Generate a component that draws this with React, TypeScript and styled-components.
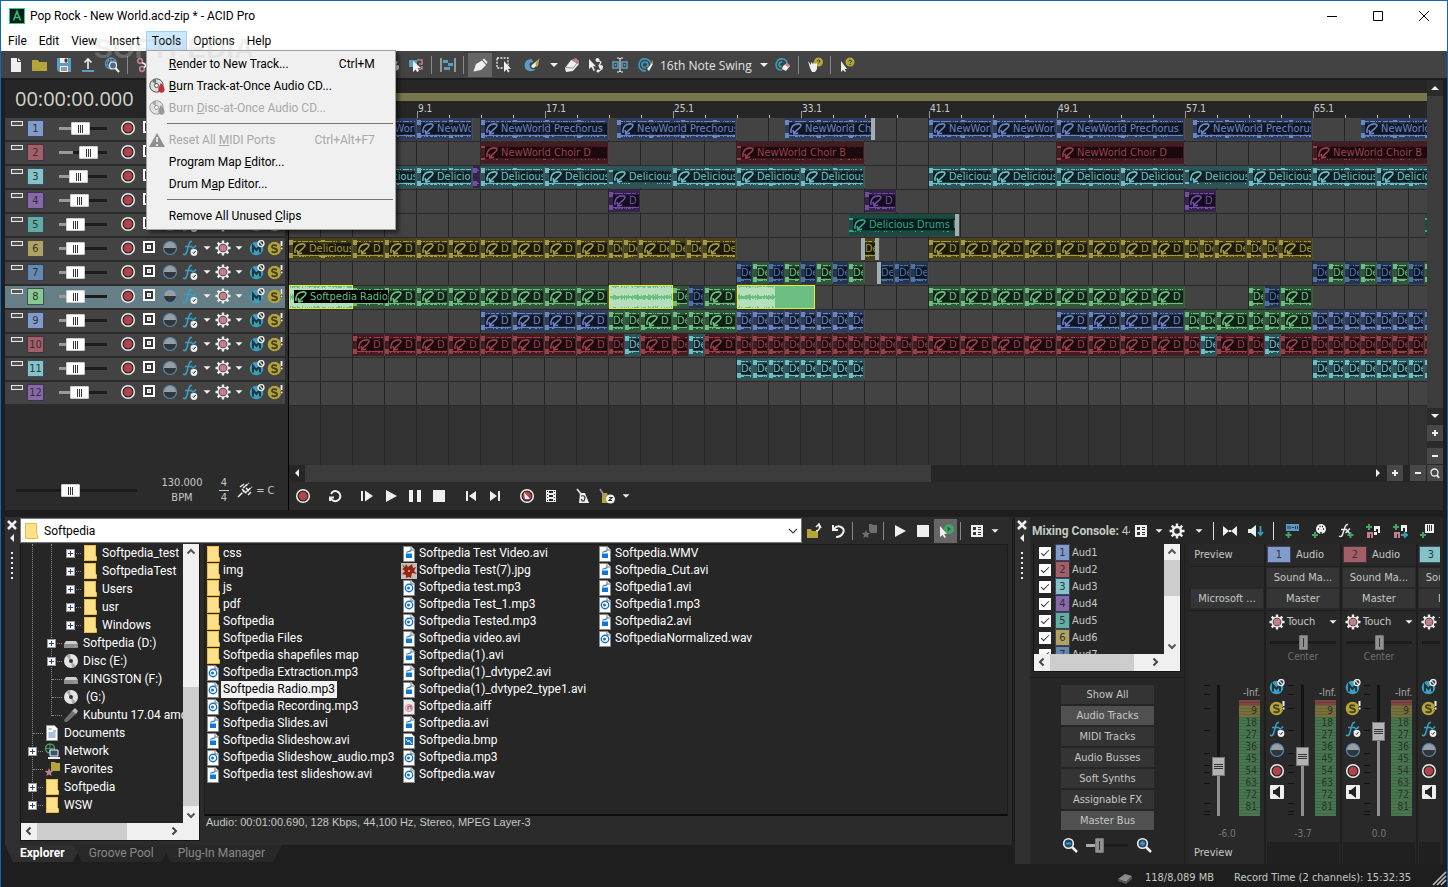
import React, { useState } from 'react';
import styled, { createGlobalStyle, css } from 'styled-components';

const font = {
  ui: 'Roboto, "Open Sans", sans-serif',
  clock: '"Open Sans", "Noto Sans", sans-serif',
  small: '"DejaVu Sans Condensed", "DejaVu Sans", sans-serif',
  plain: '"Liberation Sans", Arial, sans-serif',
};

const color = {
  frame: '#1068b8',
  base: '#1e1e1e',
  panel: '#2b2b2b',
  well: '#262626',
  raised: '#434343',
  text: '#c3c9c3',
  light: '#efefef',
};

const palette = {
  blue: { bg: '#2f3b5b', wave: '#6886c6', },
  red: { bg: '#451c23', wave: '#9b3f4b', },
  cyan: { bg: '#2d5459', wave: '#6dbfc6', },
  purple: { bg: '#34234b', wave: '#734da3', },
  teal: { bg: '#1a4a42', wave: '#2fa88c', },
  yellow: { bg: '#48421a', wave: '#a39a42', },
  navy: { bg: '#23354f', wave: '#4c72a8', },
  green: { bg: '#31573b', wave: '#6abf80', },
};

type Tone = keyof typeof palette;

const trackColors = [
  '#819bcb', '#a35e68', '#82c4c9', '#8768a8', '#5fada3', '#b0a264',
  '#6488af', '#86c991', '#819bcb', '#a35e68', '#82c4c9', '#8768a8',
];

const trackVolumes = [ 40, 70, 33, 37, 23, 23, 23, 23, 23, 23, 23, 37, ];

interface ClipData {
  x: number;
  w: number;
  tone: Tone;
  label: string;
  kind?: 'selected' | 'solid' | 'quiet';
  fade?: 'left' | 'right' | 'both';
  wide?: boolean;
}

const clip = (x: number, w: number, tone: Tone, label: string, extra: Partial<ClipData> = {}): ClipData => ({
  x, w, tone, label, ...extra,
});

const run = (x: number, count: number, w: number, tone: Tone, label: string): ClipData[] => (
  Array.from({ length: count, }, (_, i) => clip(x + i * w, w, tone, label))
);

const alternate = (x: number, count: number): ClipData[] => (
  Array.from({ length: count, }, (_, i) => clip(x + i * 16, 16, i % 2 ? 'green' : 'navy', 'De'))
);

const fill = (x: number, tone: Tone, accent: Tone): ClipData[] => [
  clip(x, 16, tone, 'De'), clip(x + 16, 16, accent, 'De'), clip(x + 32, 32, tone, 'D'),
  clip(x + 64, 16, tone, 'De'), clip(x + 80, 16, accent, 'De'), clip(x + 96, 32, tone, 'D'),
];

const yellowFill = (x: number): ClipData[] => [
  clip(x, 15, 'yellow', 'De'), clip(x + 15, 15, 'yellow', 'De'), clip(x + 30, 32, 'yellow', 'De'),
  clip(x + 62, 16, 'yellow', 'De'), clip(x + 78, 16, 'yellow', 'De'), clip(x + 94, 34, 'yellow', 'De'),
];

const lanes: ClipData[][] = [
  [
    clip(64, 64, 'blue', 'NewWorld'), clip(128, 56, 'blue', 'NewWorld'),
    clip(192, 128, 'blue', 'NewWorld Prechorus'), clip(328, 120, 'blue', 'NewWorld Prechorus'),
    clip(496, 91, 'blue', 'NewWorld Chorus', { fade: 'right', }),
    clip(640, 64, 'blue', 'NewWorld'), clip(704, 64, 'blue', 'NewWorld'),
    clip(768, 128, 'blue', 'NewWorld Prechorus'), clip(904, 120, 'blue', 'NewWorld Prechorus'),
    clip(1072, 91, 'blue', 'NewWorld Chorus'),
  ],
  [
    clip(192, 128, 'red', 'NewWorld Choir D', { kind: 'quiet', }),
    clip(448, 128, 'red', 'NewWorld Choir B', { kind: 'quiet', }),
    clip(768, 128, 'red', 'NewWorld Choir D', { kind: 'quiet', }),
    clip(1024, 128, 'red', 'NewWorld Choir B', { kind: 'quiet', }),
  ],
  [
    clip(64, 64, 'cyan', 'Delicious'), clip(128, 56, 'cyan', 'Delicious'), clip(184, 8, 'purple', ''),
    ...run(192, 2, 64, 'cyan', 'Delicious'), clip(320, 64, 'cyan', 'Delicious', { kind: 'quiet', }),
    ...run(384, 3, 64, 'cyan', 'Delicious'), ...run(640, 4, 64, 'cyan', 'Delicious'),
    clip(896, 64, 'cyan', 'Delicious', { kind: 'quiet', }), ...run(960, 3, 64, 'cyan', 'Delicious'),
  ],
  [ clip(320, 32, 'purple', 'D'), clip(576, 32, 'purple', 'D'), clip(896, 32, 'purple', 'D'), ],
  [
    clip(560, 111, 'teal', 'Delicious Drums I', { kind: 'quiet', fade: 'right', }),
    clip(1136, 64, 'teal', '', { kind: 'quiet', }),
  ],
  [
    clip(0, 64, 'yellow', 'Delicious'), ...run(64, 8, 32, 'yellow', 'D'), ...yellowFill(320),
    clip(572, 19, 'yellow', 'De', { fade: 'both', }),
    ...run(640, 8, 32, 'yellow', 'D'), ...yellowFill(896),
  ],
  [
    ...alternate(448, 8), clip(588, 18, 'navy', 'De', { fade: 'left', }), clip(606, 16, 'navy', 'De'),
    clip(622, 18, 'navy', 'De'), ...alternate(1024, 8),
  ],
  [
    ...run(64, 8, 32, 'green', 'D'),
    clip(0, 64, 'green', 'Softpedia Radio', { kind: 'selected', wide: true, }),
    clip(320, 64, 'green', '', { kind: 'selected', }),
    clip(384, 16, 'green', 'De'), clip(400, 16, 'navy', 'De'), clip(416, 32, 'green', 'D'),
    clip(448, 78, 'green', '', { kind: 'solid', }), ...run(640, 8, 32, 'green', 'D'),
    clip(960, 16, 'green', 'De'), clip(976, 16, 'navy', 'De'), clip(992, 32, 'green', 'D'),
  ],
  [
    ...run(192, 4, 32, 'blue', 'D'), ...fill(320, 'green', 'green'), ...run(448, 8, 16, 'blue', 'De'),
    ...run(768, 4, 32, 'blue', 'D'), ...fill(896, 'green', 'green'), ...run(1024, 8, 16, 'blue', 'De'),
  ],
  [
    ...run(64, 8, 32, 'red', 'D'), ...fill(320, 'red', 'cyan'), ...run(448, 12, 16, 'red', 'De'),
    ...run(640, 8, 32, 'red', 'D'), ...fill(896, 'red', 'cyan'), ...run(1024, 8, 16, 'red', 'De'),
  ],
  [ ...run(448, 8, 16, 'cyan', 'De'), ...run(1024, 8, 16, 'cyan', 'De'), ],
  [],
];

const noise = (n: number) => {
  const v = Math.sin(n * 12.9898) * 43758.5453;

  return v - Math.floor(v);
};

function wavePath(seed: number, width: number, kind?: ClipData['kind']) {
  let d = '';
  const full = kind === 'selected' || kind === 'solid';
  const end = kind === 'solid' ? 37 : width;

  for (let x = 0; x < end; x += 1) {
    const n = noise(seed + x);

    if (full) {
      const h = 6 + Math.floor(n * 5);
      d += `M${x} ${5 - Math.floor(h / 2)}h1v${h}h-1zM${x} ${17 - Math.floor(h / 2)}h1v${h}h-1z`;
    } else if (kind === 'quiet') {
      const h = x < 4 || n > 0.85 ? 2 : 1;
      d += `M${x} 4h1v${h}h-1zM${x} 16h1v${h}h-1z`;
    } else {
      const h = x % 32 < 4 ? 5 : 1 + Math.floor(n * 3);
      d += `M${x} ${4 - Math.floor(h / 2)}h1v${h}h-1zM${x} ${17 - Math.floor(h / 2)}h1v${h}h-1z`;
    }
  }

  return d;
}

// ---------------------------------------------------------------- icons

const W = '#efefef';
const B = '#5b9dc0';
const T = '#3a9fbf';
const Y = '#b3a537';
const R = '#b5424a';
const P = '#c07f8a';
const G = '#45a36a';

const gearTeeth = (
  <g stroke={W} strokeWidth='2.4'>
    <path d='M8 .5v15M.5 8h15M2.700 2.700l10.600 10.600M13.300 2.700L2.700 13.300' />
  </g>
);

const icons: Record<string, React.ReactNode> = {
  app: (
    <>
      <rect width='16' height='16' fill='#35c98a' />
      <rect x='1' y='1' width='14' height='14' fill='#0d1c1a' />
      <path d='M4.500 12.500L8 3.500l3.500 9M6 9.500h4' stroke='#2fbf7c' strokeWidth='1.600' fill='none' />
    </>
  ),
  newFile: <path d='M3 1h6v4h4v10H3zM10 1l3 3h-3z' fill={W} />,
  open: <path d='M0 3h6l1 2h8v9H0z' fill={Y} />,
  save: (
    <>
      <path d='M1 1h14v14H3l-2-2z' fill={B} />
      <path d='M4 1h8v5H4zM4 9h8v6H4z' fill={W} />
      <path d='M9 2h2v3H9zM5 11h6M5 13h6' stroke='#444' fill='#444' />
    </>
  ),
  upload: <><path d='M8 12V3M4.500 5.500L8 2l3.500 3.500' stroke={W} strokeWidth='1.600' fill='none' /><path d='M2 14h12' stroke={B} strokeWidth='2' /></>,
  globe: (
    <>
      <circle cx='7' cy='6.500' r='5.500' fill='none' stroke={B} strokeWidth='1.300' />
      <path d='M2 4h10M1 8h11M7 1v11M4.500 2q-2 4 0 9' stroke={B} fill='none' />
      <circle cx='9' cy='8.500' r='3.500' fill='#568' stroke={W} strokeWidth='1.200' />
      <path d='M11.500 11l3.500 4' stroke={W} strokeWidth='2' />
    </>
  ),
  cut: <g fill='none' stroke={P} strokeWidth='1.800'><circle cx='4' cy='4' r='2.300' /><circle cx='6' cy='12' r='2.300' /><path d='M6 5.500l9 5M8 10.500L15 4' stroke={W} /></g>,
  copy: <path d='M2 2h8v3h4v9H6v-3H2z' fill={B} />,
  automation: (
    <>
      <path d='M1 3h8v7H1z' fill={B} />
      <path d='M9 3h5v4h-3M9 12h5V9' stroke={P} strokeWidth='1.500' fill='none' />
      <path d='M5 4v11l2.500-2.500L9 15l2-1-1.500-3H13z' fill={W} />
    </>
  ),
  snap: <><path d='M1 1v14M15 1v14' stroke='#b4bcbc' strokeWidth='1.400' /><path d='M3 3h5v3H3zM8 6h5v3H8zM4 10h6v3H4z' fill={B} /></>,
  pencil: <path d='M1.500 14.500L4 7l6-3.500L14 8l-5 5zM10.500 2.500l1.500-1L15.500 5l-1 2z' fill={W} />,
  select: <><path d='M1 1h11v10H1z' fill='none' stroke={W} strokeWidth='1.300' strokeDasharray='2 1.300' /><path d='M8 4v11l2.500-2.500 1.500 3 1.500-.7-1.500-3H15z' fill={W} /></>,
  paint: <><path d='M8 2Q.5 2 .5 9q1 6 8 5 2 0 3-2-6 1-6-4 0-3 4-3-1 0-1.500-3z' fill={B} /><path d='M7 9q2 4 5 0l2-6-5 4z' fill={W} /><path d='M11.500 6l4-5-1.500 8-2 1z' fill={Y} /></>,
  erase: <><path d='M7 3l7 1 1 3-6 7-7 1-1-4z' fill={W} /><path d='M7 3l5-2 3 3v3l-3-1z' fill={P} /><path d='M2 10.500l7 .5 5-6' stroke='#777' fill='none' strokeWidth='.8' /></>,
  nodes: <><path d='M1 2v10l2.500-2 2 4 1.500-.7-2-4H8z' fill={W} /><path d='M9 3l4 2-2 4 3 3-3 2' stroke={W} fill='none' strokeWidth='1.200' /><circle cx='9.500' cy='3' r='2' fill={W} /><circle cx='13' cy='10' r='2' fill={W} /><circle cx='10' cy='14' r='1.500' fill={W} /></>,
  range: <><path d='M1 5h5v6H1zM10 5h5v6h-5z' fill='none' stroke={B} strokeWidth='1.500' /><path d='M3.500 7v2M12.500 7v2' stroke={B} strokeWidth='1.500' /><path d='M5 1h2l1 1 1-1h2M8 2v12M5 15h2l1-1 1 1h2' stroke={W} fill='none' /></>,
  groove: <><path d='M8 14Q1 14 1 7.500 2 1 8 2q5 1 5 6M8 11q-4 0-4-3.500Q4 5 7 5q3 0 3 3 0 2-2 1' stroke={T} fill='none' strokeWidth='1.600' /><path d='M9 12l5-6 1 1-4 7z' fill={W} /><path d='M13 6l2-3v5z' fill={Y} /></>,
  grooveErase: <><path d='M7 13Q1 13 1 7.500 2 1 8 2q4 1 4 4M7 10q-3 0-3-2.500Q4 5 7 5' stroke={T} fill='none' strokeWidth='1.600' /><path d='M8 9l4-3 3 3-4 5-4-2z' fill={W} /><path d='M12 6l3 2-2 2-3-2z' fill={P} /></>,
  hand: <><circle cx='11.500' cy='5' r='4.500' fill={Y} /><path d='M10 4q2-2 3 0 0 1-1.500 2' stroke='#333' fill='none' /><path d='M1 4l3 4V5l2 2 1-2 1 2 2-1v6l-2 3H5l-2-4z' fill={W} /></>,
  whatsThis: <><circle cx='11' cy='5' r='4.500' fill={Y} /><path d='M9.500 4q1.500-2 3 0 0 1-1.500 2M11 7v1' stroke='#333' fill='none' /><path d='M2 4v11l2-2 2 2 1-.7-1.500-2.300H8z' fill={W} /></>,
  record: <><circle cx='8' cy='8' r='6.300' fill='#2a2a2a' stroke={W} strokeWidth='1.500' /><circle cx='8' cy='8' r='4.300' fill={R} /></>,
  target: <><rect x='3' y='2' width='10' height='10' fill='#333' stroke='#fff' strokeWidth='2' /><rect x='6.500' y='5.500' width='3' height='3' fill='#bbb' stroke='#fff' /></>,
  phase: <><circle cx='8' cy='8' r='6.500' fill='#32363a' /><path d='M1.500 8a6.500 6.500 0 0 1 13 0z' fill='#999ea2' /><circle cx='8' cy='8' r='6.500' fill='none' stroke='#5488b4' strokeWidth='1.200' /></>,
  fx: <><path d='M1 14q3 2 4-3L7 4q1-3 3-2.500M3 6.500h6M9 6l5 5M14 5.500L8.500 11' stroke={T} strokeWidth='1.600' fill='none' /><circle cx='12' cy='12.500' r='3.400' fill={W} /><path d='M10.700 12.500l1 1 1.800-2.500' stroke='#333' fill='none' /></>,
  fxAdd: <><path d='M1 13q3 2 4-3l2-6q1-3 3-2.500M3 6.500h6M8 6l4 5M12 5.500L7.500 10' stroke={W} strokeWidth='1.400' fill='none' /><path d='M12.500 9v6M9.500 12h6' stroke={G} strokeWidth='2' /></>,
  gear: <>{gearTeeth}<circle cx='8' cy='8' r='5.600' fill={W} /><circle cx='8' cy='8' r='4.300' fill='#333' /><circle cx='8' cy='8' r='3.600' fill={P} /></>,
  gearPlain: <>{gearTeeth}<circle cx='8' cy='8' r='4' fill='#2b2b2b' stroke={W} strokeWidth='2.400' /></>,
  mute: <><circle cx='7.500' cy='8.500' r='6.800' fill={T} /><path d='M4 12.500V6l3.500 4L11 6v6.500' stroke='#23343c' strokeWidth='2' fill='none' /><circle cx='12' cy='3.600' r='3' fill='#333' stroke={W} strokeWidth='1.300' /><path d='M10 1.600l4 4' stroke={W} strokeWidth='1.200' /></>,
  solo: <><circle cx='7.500' cy='8.500' r='6.800' fill={Y} /><path d='M10 5.800Q5 4 5 6.800q0 1.500 2.500 1.700Q10 9 10 10.500q0 2.700-5.500 1.200' stroke='#44401c' strokeWidth='1.800' fill='none' /><path d='M13 1h3v5h-3zM13 7h3v3h-3z' fill='#333' /><path d='M14.500 1v5M14.500 7.500v2' stroke={W} strokeWidth='2' /></>,
  output: <><rect x='1' y='1' width='14' height='14' rx='1' fill={W} /><path d='M4 6h2l5-4v12l-5-4H4z' fill='#222' /></>,
  loop: <path d='M3 13V9.500H7M3.500 9.500a5 5 0 1 0 2-5.500l-1.500 2' stroke={W} strokeWidth='2' fill='none' />,
  playStart: <path d='M2 3h2v10H2zM6 2.500L14 8l-8 5.500z' fill={W} />,
  play: <path d='M3 2l11 6-11 6z' fill={W} />,
  pause: <path d='M2 2h4v12H2zM10 2h4v12h-4z' fill={W} />,
  stop: <path d='M2 2h12v12H2z' fill={W} />,
  toStart: <path d='M3 3h2v10H3zM13 3v10L6 8z' fill={W} />,
  toEnd: <path d='M11 3h2v10h-2zM3 3v10l7-5z' fill={W} />,
  recordAlt: <><circle cx='8' cy='8' r='6.300' fill='#2a2a2a' stroke={W} strokeWidth='1.500' /><circle cx='8' cy='8' r='4.300' fill={R} /><path d='M5 4l6 7H6z' fill={W} /></>,
  film: <><path d='M3 2h10v12H3z' fill={W} /><path d='M6 3h4v2H6zM6 7h4v2H6zM6 11h4v2H6zM4 3h1v1H4zM4 6h1v1H4zM4 9h1v1H4zM4 12h1v1H4zM11 3h1v1h-1zM11 6h1v1h-1zM11 9h1v1h-1zM11 12h1v1h-1z' fill='#222' /></>,
  metronome: <><path d='M5 5h5l4 10H4z' fill={W} /><path d='M2 1l8 10' stroke={W} strokeWidth='1.500' /><path d='M6 8q4-1 4 2l-1 3H7l-.500-2' stroke='#333' fill='none' strokeWidth='1.200' /></>,
  metronomeTwo: <><path d='M3 5h5l3 10H3z' fill={Y} /><path d='M1 1l5 8' stroke='#999' strokeWidth='1.500' /><circle cx='11.500' cy='11' r='4.500' fill={W} /><path d='M10 9.500h3L10 12.500h3' stroke='#333' fill='none' strokeWidth='1.200' /></>,
  tuner: <path d='M1 15l6-6M5 7l5 5M6 6l6-5M9 10l6-5M7 2L3 5M14 10l-3 3M9 6l3 3' stroke={W} strokeWidth='1.500' strokeDasharray='6 1' fill='none' />,
  folderUp: <><path d='M1 6h4l1 2h6v7H1z' fill={Y} /><path d='M10 8q5-1 3-6M10 4l3-3 2 4' stroke={W} strokeWidth='1.600' fill='none' /></>,
  refresh: <path d='M3 2v5h5M4 6q3-4 7-2t2 6-7 4' stroke={W} strokeWidth='2' fill='none' />,
  favorite: <path d='M8 1h3l1 1h4v8H9.500L8 8V1zM5 7l1.200 2.700 3 .3-2.200 2 .6 3L5 13.500 2.400 15 3 12 .8 10l3-.3z' fill='#6f6f6f' />,
  autoPlay: <><circle cx='11' cy='6' r='5' fill={G} /><path d='M9.500 3.500L13 6l-3.500 2.500z' fill='#264' /><path d='M2 3v11l2.500-2 2 3 1.500-1-2-3h3z' fill={W} /></>,
  list: <><rect x='2' y='2' width='12' height='12' fill={W} /><path d='M4 4h3v3H4zM4 9h3v3H4zM9 4h3v1H9zM9 6h3v1H9zM9 9h3v1H9zM9 11h3v1H9z' fill='#333' /></>,
  mixIn: <path d='M1 3v10l6-5zM15 3v10L9 8zM7 7h2v2H7z' fill={W} />,
  dim: <><path d='M0 6h3l5-4v12l-5-4H0z' fill={W} /><path d='M12.500 3v9M10 9l2.500 3L15 9' stroke={T} fill='none' strokeWidth='1.800' /></>,
  busAdd: <><rect x='2' y='1' width='13' height='7' fill={B} /><path d='M4 3v3M6 3v3M8 4.500h2M11.500 3v3M13.500 3v3' stroke='#235' strokeWidth='1' /><path d='M4.500 9v6M1.500 12h6' stroke={G} strokeWidth='2' /></>,
  midiAdd: <><circle cx='10' cy='6' r='5' fill={W} /><path d='M7 6h1M12 6h1M8.500 3.500h1M11 3.500h1M10 9v2' stroke='#222' strokeWidth='1.500' /><path d='M4 9v6M1 12h6' stroke={G} strokeWidth='2' /></>,
  insertAdd: <><path d='M4 1v6M1 4h6' stroke={G} strokeWidth='2' /><path d='M9 3h6v7h-2V6h-2v2H9zM9 9h3v3H9z' fill={W} /><path d='M2 9h6v6H6v-4H5v4H2z' fill={P} /></>,
  insertOut: <><path d='M4 1v6M1 4h6' stroke={G} strokeWidth='2' /><path d='M9 2h6v7h-2V5h-2v3H9z' fill={W} /><path d='M2 9h6v6H6v-4H5v4H2z' fill={P} /><path d='M9 12h5M12 9.500l3 2.500-3 2.500' stroke={T} strokeWidth='2' fill='none' /></>,
  synthAdd: <><rect x='6' y='1' width='9' height='9' fill={W} /><path d='M8.500 2v6M10.500 2v6M12.500 2v6' stroke='#333' /><path d='M4 9v6M1 12h6' stroke={G} strokeWidth='2' /></>,
  zoomOut: <><circle cx='6.500' cy='6.500' r='4.800' fill='#246' stroke={W} strokeWidth='1.600' /><path d='M4 6.500h5' stroke={T} strokeWidth='2' /><path d='M10 10l5 5' stroke={W} strokeWidth='2.500' /></>,
  zoomIn: <><circle cx='6.500' cy='6.500' r='4.800' fill='#246' stroke={W} strokeWidth='1.600' /><path d='M4 6.500h5M6.500 4v5' stroke={T} strokeWidth='1.800' /><path d='M10 10l5 5' stroke={W} strokeWidth='2.500' /></>,
  search: <><circle cx='7.500' cy='7.500' r='3.500' fill='none' stroke={W} strokeWidth='1.300' /><path d='M10 10l2 3' stroke={W} strokeWidth='1.800' /></>,
  plus: <path d='M7 5h2v2h2v2H9v2H7V9H5V7h2z' fill={W} />,
  minus: <path d='M5 7h6v2H5z' fill={W} />,
  up: <path d='M4 10h8L8 6z' fill={W} />,
  down: <path d='M4 6h8l-4 4z' fill={W} />,
  left: <path d='M10 4v8L6 8z' fill={W} />,
  right: <path d='M6 4v8l4-4z' fill={W} />,
  close: <path d='M4 4l8 8M12 4l-8 8' stroke={W} strokeWidth='2.500' />,
  chevUp: <path d='M4.500 9.500L8 6l3.500 3.500' stroke='#555' strokeWidth='2' fill='none' />,
  chevDown: <path d='M4.500 6.500L8 10l3.500-3.500' stroke='#555' strokeWidth='2' fill='none' />,
  comboDown: <path d='M4 6l4 4 4-4' stroke='#444' strokeWidth='1.200' fill='none' />,
  chevLeft: <path d='M9.500 4.500L6 8l3.500 3.500' stroke='#444' strokeWidth='2' fill='none' />,
  chevRight: <path d='M6.500 4.500L10 8l-3.500 3.500' stroke='#444' strokeWidth='2' fill='none' />,
  folder: <><path d='M2 0h12v16H2z' fill='#ffe08a' /><path d='M2.500 .5h11v10l1 1v4h-12z' fill='none' stroke='#e8bb3c' /></>,
  audio: <><path d='M2.500.5h8l3 3v12h-11z' fill='#fff' stroke='#8a8a8a' /><path d='M10 1v3h3' stroke='#777' fill='none' /><circle cx='8' cy='8' r='3.700' fill='none' stroke='#1472c8' strokeWidth='1.400' /><circle cx='7.500' cy='8' r='1.500' fill='#1472c8' /></>,
  video: <><path d='M2.500.5h8l3 3v12h-11z' fill='#fff' stroke='#8a8a8a' /><path d='M10 1v3h3' stroke='#777' fill='none' /><path d='M5 7.500h6V12H5zM5 6l5-2 .5 1.200-5 1.600z' fill='#0f78d4' /></>,
  image: <><path d='M2.500.5h8l3 3v12h-11z' fill='#fff' stroke='#8a8a8a' /><path d='M4 4h8v8H4z' fill='#1472c8' /><path d='M5 6l2 3 1-2 3 4' stroke='#fff' fill='none' /></>,
  tune: <><path d='M2.500.5h8l3 3v12h-11z' fill='#eee' stroke='#8a8a8a' /><circle cx='8' cy='9' r='3.700' fill='#cfe0f4' stroke='#d99' /><path d='M7 11V7.500l3-.5v3.500' stroke='#c33b5a' strokeWidth='1.200' fill='none' /></>,
  photo: <><rect width='16' height='16' fill='#c9bdb8' /><path d='M1 1l3 3 1-3 2 3 4-3 1 4 3-1-2 4 3 3-5-1-1 5-2-1-3 1V12L1 11l3-3-3-2 2-1z' fill='#922412' /><circle cx='8' cy='8' r='1' fill='#e8c840' /></>,
  drive: <><path d='M3 6h10l2 3H1z' fill='#cfcfcf' /><path d='M1 9h14v4H1z' fill='#8d8d8d' /><path d='M11 11h2' stroke='#3f3' /></>,
  disc: <><circle cx='8' cy='8' r='7' fill='#e4e4e4' /><path d='M8 8L3 3a7 7 0 0 1 4-2zM8 8l5 5a7 7 0 0 1-4 2z' fill='#aaa' /><circle cx='8' cy='8' r='2' fill='#333' /></>,
  usb: <><path d='M1 13l8-9 4 3-9 8H2z' fill='#707070' /><path d='M9 4l3-3 3 3-2 3z' fill='#bbb' /></>,
  doc: <><path d='M2.500.5h8l3 3v12h-11z' fill='#fff' stroke='#999' /><path d='M4.500 4h3M9 6h3M4.500 8h7M4.500 10h7M4.500 12h7' stroke='#4b86b8' /></>,
  network: <><circle cx='6' cy='5.500' r='4.500' fill='none' stroke='#4f9d6c' strokeWidth='1.400' /><path d='M1 5.500h10M6 1v9' stroke='#4f9d6c' /><path d='M6 7h8v6H6z' fill='#357' stroke={W} /><path d='M4 15h12' stroke={W} strokeWidth='2' /></>,
  favFolder: <><path d='M7 1h4l1 1h4v8H7z' fill={Y} /><path d='M5 7l1.200 2.700 3 .3-2.200 2 .6 3L5 13.500 2.400 15 3 12 .8 10l3-.3z' fill={P} /></>,
  burn: <><circle cx='7.500' cy='7.500' r='6.700' fill='#ddd' stroke='#555' /><path d='M7.500 7.500L3 3a6 6 0 0 1 4-2z' fill='#777' /><circle cx='7.500' cy='7.500' r='2' fill='#fff' stroke='#555' /><path d='M12 5q5 6 3 8.500t-5.500 0Q8.500 10 12 5z' fill='#c03038' /></>,
  burnOff: <><circle cx='7.500' cy='7.500' r='6.700' fill='#e2e2e2' stroke='#999' /><path d='M7.500 7.500L3 3a6 6 0 0 1 4-2z' fill='#aaa' /><circle cx='7.500' cy='7.500' r='2' fill='#fff' stroke='#999' /><path d='M12 5q5 6 3 8.500t-5.500 0Q8.500 10 12 5z' fill='#999' /></>,
  warn: <><path d='M8 1l8 14H0z' fill='#8f8f8f' /><path d='M8 5v5M8 12v2' stroke='#eee' strokeWidth='1.800' /></>,
  chip: <><path d='M1 9l7-5 7 2-6 6z' fill='#8c8c8c' /><path d='M1 9l8 3 6-6v3l-6 5-8-3z' fill='#555' /></>,
  minimize: <path d='M3 8.500h10' stroke='#000' />,
  maximize: <path d='M3.500 3.500h9v9h-9z' stroke='#000' fill='none' />,
  quit: <path d='M3 3l10 10M13 3L3 13' stroke='#000' />,
  grip: <path d='M2 15L15 2M6 15l9-9M10 15l5-5' stroke='#bbb' strokeWidth='1.600' />,
};

function Icon({ name, size = 16, }: { name: string; size?: number; }) {
  return (
    <svg width={size} height={size} viewBox='0 0 16 16' fill='none' aria-hidden='true' style={{ flex: 'none', }}>
      {icons[name]}
    </svg>
  );
}

// ---------------------------------------------------------------- shell

const GlobalStyle = createGlobalStyle`
  *, *::before, *::after { box-sizing: border-box; }
  body { margin: 0; background: ${color.base}; }
  button, input, select { font: inherit; color: inherit; margin: 0; }
  ul { list-style: none; margin: 0; padding: 0; }
`;

const Window = styled.div`
  display: flex;
  flex-direction: column;
  min-height: 100vh;
  position: relative;
  border: 1px solid ${color.frame};
  background: ${color.base};
  color: ${color.text};
  font-family: ${font.small};
  font-size: 11px;
  overflow: hidden;
`;

const TitleBar = styled.header`
  display: flex;
  align-items: center;
  gap: 5px;
  height: 30px;
  padding-left: 8px;
  background: #fff;
  color: #000;
  font: 12px ${font.ui};
`;

const WindowButtons = styled.div`
  display: flex;
  margin-left: auto;
`;

const bare = css`
  display: flex;
  align-items: center;
  justify-content: center;
  padding: 0;
  border: none;
  background: none;
`;

const WindowButton = styled.button`
  ${bare}
  width: 46px;
  height: 30px;
`;

const MenuBar = styled.nav`
  display: flex;
  height: 20px;
  padding-left: 1px;
  background: #fff;
  color: #000;
  font: 12px ${font.ui};
`;

const MenuSlot = styled.div`
  position: relative;
`;

const MenuButton = styled.button<{ $open?: boolean; }>`
  ${bare}
  height: 20px;
  padding: 0 5px;
  border: 1px solid ${({ $open, }) => ($open ? '#99d1ff' : 'transparent')};
  background: ${({ $open, }) => ($open ? '#cce8ff' : 'none')};
`;

const Menu = styled.div`
  position: absolute;
  z-index: 5;
  top: 19px;
  left: 0;
  width: 250px;
  padding: 2px;
  border: 1px solid #a0a0a0;
  background: #f0f0f0;
  box-shadow: 3px 3px 4px rgba(0, 0, 0, 0.5);
`;

const MenuItem = styled.button`
  display: grid;
  grid-template-columns: 20px 1fr auto;
  align-items: center;
  width: 100%;
  height: 22px;
  padding: 0 18px 0 0;
  border: none;
  background: none;
  text-align: left;

  &:disabled { color: #a8a8a8; }
`;

const MenuRule = styled.hr`
  margin: 4px 0 5px 18px;
  border: none;
  border-top: 1px solid #777;
`;

const Watermark = styled.span`
  position: absolute;
  z-index: 6;
  top: 32px;
  left: 93px;
  font: bold 28px ${font.plain};
  color: rgba(200, 200, 200, 0.28);
  pointer-events: none;
`;

const Toolbar = styled.div`
  display: flex;
  align-items: center;
  height: 29px;
  padding: 1px 0 0 3px;
  border-bottom: 2px solid ${color.base};
  background: ${color.raised};
`;

const ToolButton = styled.button<{ $on?: boolean; $w?: number; }>`
  ${bare}
  width: ${({ $w = 24, }) => $w}px;
  height: 24px;
  background: ${({ $on, }) => ($on ? '#666' : 'none')};
`;

const Divider = styled.span<{ $bright?: boolean; }>`
  flex: none;
  width: 8px;
  height: 18px;
  background: linear-gradient(${({ $bright, }) => ($bright ? '#ddd, #ddd' : '#888, #888')}) 3px 0 / 1px 100% no-repeat;
`;

const SwingName = styled.span`
  width: 97px;
  font: 12px ${font.clock};
  color: #e4e4e4;
`;

// ---------------------------------------------------------------- tracks

const Workspace = styled.main`
  display: flex;
  margin: 0 4px;
  background: ${color.panel};
`;

const TrackPanel = styled.section`
  display: flex;
  flex-direction: column;
  flex: none;
  width: 284px;
  padding-right: 3px;
  border-right: 1px solid #000;
`;

const Clock = styled.output`
  height: 38px;
  padding-left: 10px;
  background: ${color.well};
  font: 20px/38px ${font.clock};
  color: #d4d4c8;
`;

const TrackRow = styled.div<{ $selected: boolean; }>`
  display: flex;
  align-items: center;
  height: 22px;
  margin-bottom: 2px;
  padding: 0 0 2px 6px;
  background: ${({ $selected, }) => ($selected ? '#667e86' : color.raised)};
`;

const Collapse = styled.button`
  align-self: flex-start;
  width: 12px;
  height: 5px;
  margin: 3px 4px 0 0;
  padding: 0;
  border: 1px solid #e8e8e8;
  background: #555;
`;

const Badge = styled.span<{ $color: string; $w?: number; }>`
  flex: none;
  width: ${({ $w = 17, }) => $w}px;
  height: 17px;
  border: 1px solid rgba(30, 30, 50, 0.7);
  background: ${({ $color, }) => $color};
  color: #333;
  font-size: 11px;
  line-height: 15px;
  text-align: center;
`;

const HSlider = styled.input.attrs({ type: 'range', })<{ $fill: string; $w: number; }>`
  appearance: none;
  width: ${({ $w, }) => $w}px;
  height: 14px;
  background: linear-gradient(to right, ${({ $fill, }) => $fill} 30%, #1c1c1c 30%) center / 100% 3px no-repeat;

  &::-webkit-slider-thumb {
    appearance: none;
    width: 19px;
    height: 13px;
    border: 1px solid #ccc;
    border-radius: 1px;
    background:
      linear-gradient(#333, #333) 6px 2px / 1px 8px no-repeat,
      linear-gradient(#333, #333) 8px 2px / 1px 8px no-repeat,
      linear-gradient(#333, #333) 10px 2px / 1px 8px no-repeat,
      #fff;
  }
`;

const TrackSlider = styled(HSlider)`
  margin: 0 11px 0 15px;
`;

const TrackIcons = styled.div`
  display: grid;
  grid-template-columns: 20px 22px 20px 19px 16px 15px 18px 17px 20px;
  align-items: center;
  justify-items: center;
`;

const IconButton = styled.button`
  ${bare}
`;

const TempoBar = styled.div`
  display: flex;
  align-items: center;
  height: 40px;
  margin-top: auto;
  padding-left: 11px;
`;

const Tempo = styled.span`
  width: 60px;
  margin-left: 15px;
  line-height: 15px;
  text-align: center;
`;

const Meter44 = styled.span`
  width: 10px;
  margin: 0 8px 0 7px;
  line-height: 14px;
  text-align: center;

  span:first-child {
    display: block;
    border-bottom: 1px solid ${color.text};
  }

  span { display: block; }
`;

const TrackName = ({ n, selected, }: { n: number; selected: boolean; }) => (
  <TrackRow $selected={selected}>
    <Collapse type='button' aria-label={`Collapse track ${n}`} />
    <Badge $color={trackColors[n - 1]}>{n}</Badge>
    <TrackSlider $fill='#999' $w={48} defaultValue={trackVolumes[n - 1]} aria-label={`Volume ${n}`} />
    <TrackIcons>
      {[ 'record', 'target', 'phase', 'fx', 'down', 'gear', 'down', 'mute', 'solo', ].map((name, i) => (
        <IconButton type='button' key={i} aria-label={name}>
          <Icon name={name} size={name === 'down' ? 14 : 16} />
        </IconButton>
      ))}
    </TrackIcons>
  </TrackRow>
);

const Timeline = styled.section`
  display: flex;
  flex-direction: column;
  flex: 1;
  min-width: 0;
`;

const LoopBar = styled.div`
  height: 21px;
  border-top: 13px solid ${color.well};
  background: #77774d;
`;

const Ruler = styled.div`
  display: flex;
  height: 17px;
  overflow: hidden;
  background:
    repeating-linear-gradient(to right, #bbb 0 1px, transparent 1px 32px) 0 100% / 100% 3px no-repeat,
    ${color.well};
`;

const RulerMark = styled.span`
  flex: none;
  width: 128px;
  padding-left: 1px;
  background: linear-gradient(#999, #999) 0 100% / 1px 7px no-repeat;
  font-size: 10px;
  line-height: 16px;
  color: #ccc;
`;

const Lanes = styled.div`
  position: relative;
  height: 347px;
  overflow: hidden;
  background:
    repeating-linear-gradient(to right, transparent 0 31px, #262626 31px 32px),
    linear-gradient(${color.raised} 287px, #323232 287px);
`;

const Lane = styled.div`
  position: relative;
  height: 24px;
  border-bottom: 1px solid #2a2a2a;
`;

const ClipBox = styled.div<{ $tone: Tone; $kind?: string; }>`
  position: absolute;
  top: 0;
  height: 22px;
  border-right: 1px solid rgba(90, 90, 80, 0.6);
  background: ${({ $tone, }) => palette[$tone].bg};
  color: ${({ $tone, }) => palette[$tone].wave};

  ${({ $kind, }) => ($kind === 'selected' || $kind === 'solid') && css`
    top: -1px;
    height: 24px;
    border: 1px solid #e6f020;
    background: #6cbf80;
  `}
`;

const WaveSvg = styled.svg`
  display: block;
  position: absolute;
  top: 0;
  left: 0;
`;

const ClipLabel = styled.div<{ $solid?: boolean; }>`
  position: absolute;
  top: 4px;
  left: 4px;
  right: ${({ $solid, }) => ($solid ? 'auto' : '1px')};
  display: flex;
  align-items: center;
  height: 13px;
  overflow: hidden;
  background: ${({ $solid, }) => ($solid ? '#000' : 'rgba(0, 0, 0, 0.62)')};
  line-height: 13px;
  white-space: nowrap;
`;

const Fade = styled.span<{ $side: 'left' | 'right'; }>`
  position: absolute;
  top: 0;
  ${({ $side, }) => $side}: 0;
  width: 4px;
  height: 22px;
  background: #a3aeb0;
`;

function Clip({ data, }: { data: ClipData; }) {
  const { x, w, tone, label, kind, fade, wide, } = data;
  const light = kind === 'selected' || kind === 'solid';

  return (
    <ClipBox $tone={tone} $kind={kind} style={{ left: x, width: w, zIndex: wide ? 2 : 1, }}>
      <WaveSvg width={w - 2} height='22' aria-hidden='true'>
        <path d={wavePath(x, w, kind)} fill={light ? '#b6e0bc' : palette[tone].wave} />
      </WaveSvg>
      {label && (
        <ClipLabel $solid={wide}>
          {w > 20 && (
            <svg width='16' height='13' viewBox='0 0 16 13' fill='none' aria-hidden='true' style={{ flex: 'none', }}>
              <path d='M2 11Q1 5 6 2.500q5-1.500 6 .5 0 2-4 5l-3 3M4 8l1 4 4-1' stroke='currentColor' strokeWidth='1.600' />
            </svg>
          )}
          {label}
        </ClipLabel>
      )}
      {(fade === 'right' || fade === 'both') && <Fade $side='right' />}
      {(fade === 'left' || fade === 'both') && <Fade $side='left' />}
    </ClipBox>
  );
}

const HScroll = styled.div`
  display: flex;
  height: 17px;
  background: ${color.well};
`;

const HThumb = styled.div`
  width: 55%;
  background: #3c3c3c;
`;

const Transport = styled.div`
  display: flex;
  align-items: center;
  height: 28px;
  padding-left: 2px;
`;

const TransportButton = styled(IconButton)<{ $before?: number; }>`
  width: 24px;
  margin-left: ${({ $before = 0, }) => $before}px;
`;

const SideScroll = styled.div`
  display: flex;
  flex-direction: column;
  width: 16px;
  background: ${color.panel};
`;

const SideTrack = styled.div`
  flex: none;
  height: 312px;
  background: #3c3c3c;
`;

const SquareButton = styled.button<{ $raised?: boolean; $before?: number; }>`
  ${bare}
  flex: none;
  width: 16px;
  height: 16px;
  margin-top: ${({ $before = 0, }) => $before}px;
  background: ${({ $raised, }) => ($raised ? '#484848' : 'none')};
`;

const ScrollTail = styled.div`
  display: flex;
  gap: 1px;
  margin-left: auto;
  padding-right: 1px;
`;

const ScrollGap = styled.span`
  width: 5px;
`;

// ---------------------------------------------------------------- dock

const Dock = styled.div`
  display: flex;
  flex: 1;
  gap: 3px;
  padding: 7px 4px 4px;
`;

const ExplorerColumn = styled.section`
  display: flex;
  flex: 1;
  flex-direction: column;
  min-width: 0;
`;

const Panel = styled.div`
  display: flex;
  flex: 1;
  min-height: 0;
  background: ${color.panel};
`;

const Gutter = styled.div`
  display: flex;
  flex-direction: column;
  align-items: center;
  flex: none;
  width: 15px;
  padding-right: 2px;
  background: #303030;

  svg + svg { margin-top: -3px; }

  &::after {
    content: '';
    width: 2px;
    height: 28px;
    margin-top: 6px;
    background: repeating-linear-gradient(#eee 0 2px, transparent 2px 5px);
  }
`;

const PanelBody = styled.div`
  display: flex;
  flex: 1;
  flex-direction: column;
  min-width: 0;
`;

const PanelHead = styled.div`
  display: flex;
  align-items: center;
  height: 27px;
  padding-right: 2px;
`;

const ExplorerHead = styled(PanelHead)`
  padding-right: 10px;
`;

const PathBox = styled.div`
  position: relative;
  display: flex;
  align-items: center;
  flex: 1;
  height: 25px;
  border: 1px solid #777;
  background: #fff;
  color: #000;

  svg { position: absolute; left: 2px; }
  svg:last-child { left: auto; right: 0; }

  select {
    appearance: none;
    width: 100%;
    padding: 0 20px 0 23px;
    border: none;
    background: none;
    font: 12px ${font.ui};
  }
`;

const ExplorerGrid = styled.div`
  display: grid;
  flex: 1;
  grid-template-columns: 180px 1fr;
  gap: 4px;
  padding: 0 4px 4px 0;
  font: 12px ${font.ui};
  color: #fff;
`;

const ScrollBox = styled.div`
  display: grid;
  grid-template-columns: 1fr 16px;
  grid-template-rows: 1fr 17px;
  min-width: 0;
  border: 1px solid #151515;
  border-top: none;
  background: ${color.light};
`;

const Tree = styled.ul`
  position: relative;
  overflow: hidden;
  background: ${color.well};

  &::before {
    content: '';
    position: absolute;
    top: 0;
    left: 11px;
    height: 262px;
    border-left: 1px dotted #888;
  }

  &::after {
    content: '';
    position: absolute;
    top: 0;
    left: 30px;
    height: 172px;
    border-left: 1px dotted #888;
  }
`;

const TreeItem = styled.li<{ $level: number; }>`
  position: relative;
  z-index: 1;
  display: flex;
  align-items: center;
  height: 18px;
  padding-left: ${({ $level, }) => 7 + $level * 19}px;
  white-space: nowrap;

  svg { margin-right: 4px; }
`;

const Expander = styled.button<{ $leaf: boolean; }>`
  position: relative;
  flex: none;
  width: 9px;
  height: 9px;
  margin-right: 7px;
  padding: 0;
  border: 1px solid #999;
  background:
    linear-gradient(#234a9c, #234a9c) center / 5px 1px no-repeat,
    linear-gradient(#234a9c, #234a9c) center / 1px 5px no-repeat,
    #fff;

  &::after {
    content: '';
    position: absolute;
    top: 3px;
    left: 9px;
    width: 5px;
    border-top: 1px dotted #888;
  }

  ${({ $leaf, }) => $leaf && css`
    border-color: transparent;
    background: none;

    &::after { left: 4px; width: 10px; }
  `}
`;

const VBar = styled.div`
  display: flex;
  flex-direction: column;
  justify-content: space-between;
  background: #f0f0f0;
`;

const HBar = styled.div`
  display: flex;
  grid-column: 1 / -1;
  padding-right: 17px;
  background: #f0f0f0;
`;

const BarTrack = styled.div`
  display: flex;
  flex: 1;
`;

const VThumb = styled.div<{ $from: number; $size: number; }>`
  height: ${({ $size, }) => $size}px;
  margin-top: ${({ $from, }) => $from}px;
  margin-bottom: auto;
  background: #cdcdcd;
`;

const BarThumb = styled.div<{ $size: number; }>`
  width: ${({ $size, }) => $size}px;
  background: #cdcdcd;
`;

const Files = styled.div`
  display: flex;
  flex-direction: column;
  min-width: 0;
`;

const FileList = styled.ul`
  display: grid;
  grid-auto-flow: column;
  grid-template-rows: repeat(14, 17px);
  grid-auto-columns: 196px;
  height: 272px;
  border: 1px solid #1c1c1c;
  border-bottom: 2px solid #0c0c0c;
  background: ${color.well};
`;

const FileItem = styled.li<{ $selected: boolean; }>`
  display: flex;
  align-items: center;
  white-space: nowrap;

  span {
    padding: 0 2px;
    line-height: 17px;
    ${({ $selected, }) => $selected && 'background: #f2f2f2; color: #000;'}
  }
`;

const FileInfo = styled.p`
  margin: 0;
  padding-left: 2px;
  font: 11px/13px ${font.plain};
  color: ${color.text};
`;

const Tabs = styled.div`
  display: flex;
  height: 19px;
`;

const Tab = styled.button<{ $active: boolean; }>`
  height: 17px;
  margin-right: -8px;
  padding: 0 17px 2px 15px;
  border: none;
  background: ${({ $active, }) => ($active ? '#2f2f2f' : '#282828')};
  clip-path: polygon(0 0, 100% 0, calc(100% - 9px) 100%, 8px 100%);
  font: ${({ $active, }) => ($active ? 'bold' : 'normal')} 12px/14px ${font.ui};
  color: ${({ $active, }) => ($active ? '#fff' : '#888')};
`;

const tree: [ number, string, string, boolean, ][] = [
  [ 2, 'folder', 'Softpedia_test', false, ], [ 2, 'folder', 'SoftpediaTest', false, ],
  [ 2, 'folder', 'Users', false, ], [ 2, 'folder', 'usr', false, ], [ 2, 'folder', 'Windows', false, ],
  [ 1, 'drive', 'Softpedia (D:)', false, ], [ 1, 'disc', 'Disc (E:)', false, ],
  [ 1, 'drive', 'KINGSTON (F:)', true, ], [ 1, 'disc', '\u00a0(G:)', true, ],
  [ 1, 'usb', 'Kubuntu 17.04 amd64', true, ], [ 0, 'doc', 'Documents', true, ],
  [ 0, 'network', 'Network', false, ], [ 0, 'favFolder', 'Favorites', true, ],
  [ 0, 'folder', 'Softpedia', false, ], [ 0, 'folder', 'WSW', false, ],
];

const files = [
  'css', 'img', 'js', 'pdf', 'Softpedia', 'Softpedia Files', 'Softpedia shapefiles map',
  'Softpedia Extraction.mp3', 'Softpedia Radio.mp3', 'Softpedia Recording.mp3', 'Softpedia Slides.avi',
  'Softpedia Slideshow.avi', 'Softpedia Slideshow_audio.mp3', 'Softpedia test slideshow.avi',
  'Softpedia Test Video.avi', 'Softpedia Test(7).jpg', 'Softpedia test.mp3', 'Softpedia Test_1.mp3',
  'Softpedia Tested.mp3', 'Softpedia video.avi', 'Softpedia(1).avi', 'Softpedia(1)_dvtype2.avi',
  'Softpedia(1)_dvtype2_type1.avi', 'Softpedia.aiff', 'Softpedia.avi', 'Softpedia.bmp', 'Softpedia.mp3',
  'Softpedia.wav', 'Softpedia.WMV', 'Softpedia_Cut.avi', 'Softpedia1.avi', 'Softpedia1.mp3',
  'Softpedia2.avi', 'SoftpediaNormalized.wav',
];

function fileIcon(name: string) {
  const ext = name.split('.')[1];

  if (!ext) return 'folder';
  if (ext === 'jpg') return 'photo';
  if (ext === 'bmp') return 'image';
  if (ext === 'aiff') return 'tune';

  return ext === 'mp3' || ext === 'wav' ? 'audio' : 'video';
}

function Explorer() {
  const [ selected, setSelected, ] = useState('Softpedia Radio.mp3');
  const [ tab, setTab, ] = useState('Explorer');

  return (
    <ExplorerColumn>
      <Panel>
        <Gutter><Icon name='close' /><Icon name='left' /></Gutter>
        <PanelBody>
          <ExplorerHead>
            <PathBox>
              <Icon name='folder' />
              <select aria-label='Folder' defaultValue='Softpedia'><option>Softpedia</option></select>
              <Icon name='comboDown' />
            </PathBox>
            <ToolButton type='button' aria-label='Up'><Icon name='folderUp' /></ToolButton>
            <ToolButton type='button' aria-label='Refresh' $w={23}><Icon name='refresh' /></ToolButton>
            <Divider />
            <ToolButton type='button' aria-label='Add to favorites' $w={23}><Icon name='favorite' /></ToolButton>
            <Divider />
            <ToolButton type='button' aria-label='Play' $w={23}><Icon name='play' /></ToolButton>
            <ToolButton type='button' aria-label='Stop' $w={23}><Icon name='stop' /></ToolButton>
            <ToolButton type='button' aria-label='Auto preview' $on $w={23}><Icon name='autoPlay' /></ToolButton>
            <Divider />
            <ToolButton type='button' aria-label='View' $w={23}><Icon name='list' /></ToolButton>
            <ToolButton type='button' aria-label='View options' $w={14}><Icon name='down' size={14} /></ToolButton>
          </ExplorerHead>
          <ExplorerGrid>
            <ScrollBox>
              <Tree>
                {tree.map(([ level, icon, name, leaf, ]) => (
                  <TreeItem key={name + level} $level={level}>
                    <Expander type='button' $leaf={leaf} aria-label={`Expand ${name}`} />
                    <Icon name={icon} />
                    {name}
                  </TreeItem>
                ))}
              </Tree>
              <VBar><Icon name='chevUp' /><VThumb $from={127} $size={119} /><Icon name='chevDown' /></VBar>
              <HBar><Icon name='chevLeft' /><BarTrack><BarThumb $size={90} /></BarTrack><Icon name='chevRight' /></HBar>
            </ScrollBox>
            <Files>
              <FileList>
                {files.map((name) => (
                  <FileItem key={name} $selected={name === selected} onClick={() => setSelected(name)}>
                    <Icon name={fileIcon(name)} />
                    <span>{name}</span>
                  </FileItem>
                ))}
              </FileList>
              <FileInfo>Audio: 00:01:00.690, 128 Kbps, 44,100 Hz, Stereo, MPEG Layer-3</FileInfo>
            </Files>
          </ExplorerGrid>
        </PanelBody>
      </Panel>
      <Tabs>
        {[ 'Explorer', 'Groove Pool', 'Plug-In Manager', ].map((name) => (
          <Tab key={name} type='button' $active={tab === name} onClick={() => setTab(name)}>{name}</Tab>
        ))}
      </Tabs>
    </ExplorerColumn>
  );
}

// ---------------------------------------------------------------- mixer

const MixerPanel = styled(Panel)`
  flex: none;
  width: 428px;
  background: ${color.well};
`;

const MixerTitle = styled.h2`
  width: 98px;
  margin: 0 0 0 2px;
  overflow: hidden;
  font: bold 12px ${font.ui};
  white-space: nowrap;

  span { font-weight: normal; }
`;

const MixerGrid = styled.div`
  display: flex;
  flex: 1;
  min-height: 0;
  padding-right: 3px;
`;

const MixerSide = styled.div`
  display: flex;
  flex-direction: column;
  align-items: center;
  flex: none;
  width: 155px;
  border-right: 1px solid ${color.base};
`;

const ChannelBox = styled(ScrollBox)`
  width: 148px;
  height: 128px;
`;

const Channels = styled.ul`
  height: 110px;
  overflow: hidden;
  background: ${color.well};
`;

const ChannelItem = styled.li`
  label {
    display: flex;
    align-items: center;
    gap: 2px;
    height: 17px;
    padding-left: 5px;
  }
`;

const Check = styled.input.attrs({ type: 'checkbox', })`
  appearance: none;
  width: 12px;
  height: 12px;
  margin-right: 2px;
  background: #fff;

  &:checked::after {
    content: '';
    display: block;
    width: 8px;
    height: 4px;
    margin: 3px 2px;
    border-bottom: 1px solid #333;
    border-left: 1px solid #333;
    transform: rotate(-45deg);
  }
`;

const FilterGroup = styled.div`
  display: flex;
  flex-direction: column;
  gap: 2px;
  width: 100%;
  margin-top: 5px;
  padding: 7px 30px 0 31px;
  border-top: 1px solid ${color.base};
`;

const FilterButton = styled.button<{ $on: boolean; }>`
  height: 19px;
  padding: 0;
  border: none;
  background: ${({ $on, }) => ($on ? '#505050' : '#343434')};
  line-height: 19px;
`;

const ZoomRow = styled.div`
  display: flex;
  align-items: center;
  gap: 8px;
  margin-top: 7px;
`;

const GreySlider = styled(HSlider)`
  &::-webkit-slider-thumb {
    width: 9px;
    height: 15px;
    border-color: #777;
    background: linear-gradient(#333, #333) center / 1px 9px no-repeat, #8f9294;
  }
`;

const Strips = styled.div`
  display: flex;
  flex: 1;
  gap: 2px;
  min-width: 0;
  margin-left: 5px;
  overflow: hidden;
  background: ${color.base};
`;

const Strip = styled.div`
  display: flex;
  flex-direction: column;
  flex: none;
  width: 74px;
  background: #292929;
`;

const StripHead = styled.div`
  display: flex;
  align-items: center;
  gap: 5px;
  height: 23px;
  padding: 0 1px 1px;
  border-bottom: 1px solid ${color.base};
`;

const StripSlot = styled.button<{ $empty?: boolean; }>`
  height: 19px;
  margin: 1px;
  padding: 0 4px;
  border: none;
  background: ${({ $empty, }) => ($empty ? 'none' : '#353535')};
  line-height: 19px;
  white-space: nowrap;
`;

const TouchRow = styled.div`
  display: flex;
  align-items: center;
  gap: 2px;
  height: 22px;
  margin-top: 1px;
  padding-left: 3px;
  border-top: 1px solid ${color.base};

  svg:last-child { margin-left: auto; }
`;

const PanRow = styled.div`
  display: flex;
  flex-direction: column;
  align-items: center;
  height: 45px;
  padding-top: 3px;
  font-size: 10px;
  color: #707070;

  input { margin-bottom: 2px; }
`;

const FaderArea = styled.div<{ $plain: boolean; }>`
  display: grid;
  grid-template-columns: ${({ $plain, }) => ($plain ? 14 : 22)}px 8px 12px 1fr;
  height: 148px;
`;

const IconStack = styled.div`
  display: flex;
  flex-direction: column;
  align-items: center;
  gap: 5px;
  padding-top: 2px;
`;

const Scale = styled.svg`
  margin-top: 8px;
`;

const Fader = styled.input.attrs({ type: 'range', })<{ $value: number; }>`
  appearance: none;
  writing-mode: vertical-lr;
  direction: rtl;
  width: 13px;
  height: 131px;
  margin: 8px 0 0;
  background: linear-gradient(to top, #8f8f8f ${({ $value, }) => $value}%, #141414 ${({ $value, }) => $value}%) center / 3px 100% no-repeat;

  &::-webkit-slider-thumb {
    appearance: none;
    width: 13px;
    height: 19px;
    border: 1px solid #777;
    background:
      linear-gradient(#333, #333) 1px 6px / 9px 1px no-repeat,
      linear-gradient(#333, #333) 1px 8px / 9px 1px no-repeat,
      linear-gradient(#333, #333) 1px 10px / 9px 1px no-repeat,
      #b4b4b4;
  }
`;

const LevelColumn = styled.div`
  display: flex;
  flex-direction: column;
  align-items: flex-end;
  padding: 9px 4px 0 0;
  font-size: 10px;
  line-height: 14px;
  color: #aaa;
`;

const Level = styled.ul`
  width: 21px;
  height: 116px;
  padding: 5px 3px 0 0;
  background:
    repeating-linear-gradient(transparent 0 2px, rgba(0, 0, 0, 0.12) 2px 3px),
    linear-gradient(#7d4444 5px, #77703a 5px 17px, #48774f 17px);
  color: #2a332c;
  font-size: 10px;
  line-height: 12px;
  text-align: right;
`;

const StripFoot = styled.div`
  display: flex;
  align-items: center;
  justify-content: center;
  height: 17px;
  color: #777;
  font-size: 10px;
`;

const StripName = styled.div<{ $empty: boolean; }>`
  flex: 1;
  margin: 0 1px;
  padding-left: 3px;
  background: ${({ $empty, }) => ($empty ? '#202020' : 'none')};
  line-height: 22px;
`;

interface StripProps {
  n?: number;
  value: number;
  db: string;
}

const ticks = [ 0, 9, 23, 45, 68, 80, 87, 98, 118, 126, 129, ];

function MixerStrip({ n, value, db, }: StripProps) {
  return (
    <Strip>
      <StripHead>
        {n && <Badge $color={trackColors[n - 1]} $w={24}>{n}</Badge>}
        {n ? 'Audio' : <span>&nbsp;Preview</span>}
      </StripHead>
      {n ? <StripSlot type='button'>Sound Ma...</StripSlot> : <StripSlot type='button' $empty aria-label='Effects' />}
      <StripSlot type='button'>{n ? 'Master' : 'Microsoft ...'}</StripSlot>
      <TouchRow>
        {n && <><Icon name='gear' />Touch<Icon name='down' size={14} /></>}
      </TouchRow>
      <PanRow>
        {n && <><GreySlider $fill='#1c1c1c' $w={66} defaultValue={50} aria-label={`Pan ${n}`} />Center</>}
      </PanRow>
      <FaderArea $plain={!n}>
        <IconStack>
          {n && [ 'mute', 'solo', 'fx', 'phase', 'record', 'output', ].map((name) => (
            <IconButton key={name} type='button' aria-label={`${name} ${n}`}><Icon name={name} /></IconButton>
          ))}
        </IconStack>
        <Scale width='8' height='131' aria-hidden='true'>
          {ticks.map((y) => <path key={y} d={`M0 ${y + 0.5}h6`} stroke='#111' />)}
        </Scale>
        <Fader $value={value} defaultValue={value} aria-label={`Level ${n ?? 'preview'}`} />
        <LevelColumn>
          -Inf.
          <Level>
            {[ 9, 18, 27, 36, 45, 54, 63, 72, 81, ].map((v) => <li key={v}>{v}</li>)}
          </Level>
        </LevelColumn>
      </FaderArea>
      <StripFoot>{db}</StripFoot>
      <StripName $empty={!!n}>{n ? '' : 'Preview'}</StripName>
    </Strip>
  );
}

const filters = [ 'Show All', 'Audio Tracks', 'MIDI Tracks', 'Audio Busses', 'Soft Synths', 'Assignable FX', 'Master Bus', ];

function Mixer() {
  return (
    <MixerPanel>
      <Gutter><Icon name='close' /><Icon name='left' /></Gutter>
      <PanelBody>
        <PanelHead>
          <MixerTitle>Mixing Console: <span>44</span></MixerTitle>
          <ToolButton type='button' aria-label='Views' $w={22}><Icon name='list' /></ToolButton>
          <ToolButton type='button' aria-label='View options' $w={14}><Icon name='down' size={14} /></ToolButton>
          <ToolButton type='button' aria-label='Properties' $w={22}><Icon name='gearPlain' /></ToolButton>
          <ToolButton type='button' aria-label='Property options' $w={22}><Icon name='down' size={14} /></ToolButton>
          <Divider $bright />
          <ToolButton type='button' aria-label='Downmix' $w={24}><Icon name='mixIn' /></ToolButton>
          <ToolButton type='button' aria-label='Dim' $w={28}><Icon name='dim' /></ToolButton>
          <Divider $bright />
          {[ 'busAdd', 'midiAdd', 'fxAdd', 'insertAdd', 'insertOut', 'synthAdd', ].map((name) => (
            <ToolButton key={name} type='button' aria-label={name} $w={27}><Icon name={name} /></ToolButton>
          ))}
        </PanelHead>
        <MixerGrid>
          <MixerSide>
            <ChannelBox>
              <Channels>
                {[ 1, 2, 3, 4, 5, 6, 7, ].map((n) => (
                  <ChannelItem key={n}>
                    <label>
                      <Check defaultChecked />
                      <Badge $color={trackColors[n - 1]} $w={15}>{n}</Badge>
                      Aud{n}
                    </label>
                  </ChannelItem>
                ))}
              </Channels>
              <VBar><Icon name='chevUp' /><VThumb $from={0} $size={36} /><Icon name='chevDown' /></VBar>
              <HBar><Icon name='chevLeft' /><BarTrack><BarThumb $size={84} /></BarTrack><Icon name='chevRight' /></HBar>
            </ChannelBox>
            <FilterGroup>
              {filters.map((name, i) => (
                <FilterButton key={name} type='button' $on={i === 1 || i === 6}>{name}</FilterButton>
              ))}
            </FilterGroup>
            <ZoomRow>
              <IconButton type='button' aria-label='Narrower'><Icon name='zoomOut' /></IconButton>
              <GreySlider $fill='#aaa' $w={42} defaultValue={27} aria-label='Strip width' />
              <IconButton type='button' aria-label='Wider'><Icon name='zoomIn' /></IconButton>
            </ZoomRow>
          </MixerSide>
          <Strips>
            <MixerStrip value={36} db='-6.0' />
            <MixerStrip n={1} value={45} db='-3.7' />
            <MixerStrip n={2} value={67} db='0.0' />
            <MixerStrip n={3} value={67} db='0.0' />
          </Strips>
        </MixerGrid>
      </PanelBody>
    </MixerPanel>
  );
}

const StatusBar = styled.footer`
  display: flex;
  align-items: center;
  justify-content: flex-end;
  gap: 20px;
  height: 19px;

  svg:first-child { margin-right: -8px; }
`;

const transports: [ string, number, ][] = [
  [ 'record', 0, ], [ 'loop', 8, ], [ 'playStart', 8, ], [ 'play', 0, ], [ 'pause', 0, ], [ 'stop', 0, ],
  [ 'toStart', 8, ], [ 'toEnd', 0, ], [ 'recordAlt', 8, ], [ 'film', 0, ], [ 'metronome', 8, ],
  [ 'metronomeTwo', 0, ],
];

export default function App() {
  const [ open, setOpen, ] = useState(true);

  return (
    <Window>
      <GlobalStyle />
      <TitleBar>
        <Icon name='app' />
        Pop Rock - New World.acd-zip * - ACID Pro
        <WindowButtons>
          <WindowButton type='button' aria-label='Minimize'><Icon name='minimize' /></WindowButton>
          <WindowButton type='button' aria-label='Maximize'><Icon name='maximize' /></WindowButton>
          <WindowButton type='button' aria-label='Close'><Icon name='quit' /></WindowButton>
        </WindowButtons>
      </TitleBar>
      <MenuBar>
        {[ 'File', 'Edit', 'View', 'Insert', ].map((name) => <MenuButton key={name} type='button'>{name}</MenuButton>)}
        <MenuSlot>
          <MenuButton type='button' $open={open} onClick={() => setOpen((prev) => !prev)}>Tools</MenuButton>
          {open && (
            <Menu>
              <MenuItem type='button'><span /><span><u>R</u>ender to New Track...</span><span>Ctrl+M</span></MenuItem>
              <MenuItem type='button'><Icon name='burn' /><span><u>B</u>urn Track-at-Once Audio CD...</span></MenuItem>
              <MenuItem type='button' disabled><Icon name='burnOff' /><span>Burn <u>D</u>isc-at-Once Audio CD...</span></MenuItem>
              <MenuRule />
              <MenuItem type='button' disabled><Icon name='warn' /><span>Reset All <u>M</u>IDI Ports</span><span>Ctrl+Alt+F7</span></MenuItem>
              <MenuItem type='button'><span /><span>Program Map <u>E</u>ditor...</span></MenuItem>
              <MenuItem type='button'><span /><span>Drum M<u>a</u>p Editor...</span></MenuItem>
              <MenuRule />
              <MenuItem type='button'><span /><span>Remove All Unused <u>C</u>lips</span></MenuItem>
            </Menu>
          )}
        </MenuSlot>
        {[ 'Options', 'Help', ].map((name) => <MenuButton key={name} type='button'>{name}</MenuButton>)}
      </MenuBar>
      <Watermark aria-hidden='true'>SOFTPEDIA</Watermark>
      <Toolbar>
        {[ 'newFile', 'open', 'save', 'upload', 'globe', ].map((name) => (
          <ToolButton key={name} type='button' aria-label={name}><Icon name={name} /></ToolButton>
        ))}
        <Divider />
        <ToolButton type='button' aria-label='Cut'><Icon name='cut' /></ToolButton>
        <ToolButton type='button' aria-label='Copy'><Icon name='copy' /></ToolButton>
        <ToolButton type='button' aria-label='Paste'><Icon name='newFile' /></ToolButton>
        <Divider />
        <ToolButton type='button' aria-label='Undo' $w={32}><Icon name='refresh' /></ToolButton>
        <ToolButton type='button' aria-label='Redo' $w={32}><Icon name='loop' /></ToolButton>
        <Divider />
        {[ 'snap', 'range', 'list', 'target', 'nodes', ].map((name) => (
          <ToolButton key={name} type='button' aria-label={name}><Icon name={name} /></ToolButton>
        ))}
        <ToolButton type='button' aria-label='Lock envelopes'><Icon name='automation' /></ToolButton>
        <Divider />
        <ToolButton type='button' aria-label='Snapping'><Icon name='snap' /></ToolButton>
        <Divider />
        <ToolButton type='button' aria-label='Draw' $on><Icon name='pencil' /></ToolButton>
        <ToolButton type='button' aria-label='Select'><Icon name='select' /></ToolButton>
        <ToolButton type='button' aria-label='Paint' $w={32}><Icon name='paint' /></ToolButton>
        <ToolButton type='button' aria-label='Paint options' $w={12}><Icon name='down' /></ToolButton>
        <ToolButton type='button' aria-label='Erase'><Icon name='erase' /></ToolButton>
        <ToolButton type='button' aria-label='Envelope'><Icon name='nodes' /></ToolButton>
        <ToolButton type='button' aria-label='Time selection'><Icon name='range' /></ToolButton>
        <ToolButton type='button' aria-label='Groove' $w={28}><Icon name='groove' /></ToolButton>
        <SwingName>16th Note Swing</SwingName>
        <ToolButton type='button' aria-label='Groove list' $w={14}><Icon name='down' /></ToolButton>
        <ToolButton type='button' aria-label='Groove erase'><Icon name='grooveErase' /></ToolButton>
        <Divider />
        <ToolButton type='button' aria-label='Tutorials'><Icon name='hand' /></ToolButton>
        <Divider />
        <ToolButton type='button' aria-label='Help pointer'><Icon name='whatsThis' /></ToolButton>
      </Toolbar>
      <Workspace>
        <TrackPanel>
          <Clock>00:00:00.000</Clock>
          {trackColors.map((_, i) => <TrackName key={i} n={i + 1} selected={i === 7} />)}
          <TempoBar>
            <HSlider $fill='#1c1c1c' $w={121} defaultValue={44} aria-label='Tempo' />
            <Tempo>130.000 BPM</Tempo>
            <Meter44><span>4</span><span>4</span></Meter44>
            <Icon name='tuner' />&nbsp;= C
          </TempoBar>
        </TrackPanel>
        <Timeline>
          <LoopBar />
          <Ruler>
            {[ '', '9.1', '17.1', '25.1', '33.1', '41.1', '49.1', '57.1', '65.1', ].map((m) => <RulerMark key={m}>{m}</RulerMark>)}
          </Ruler>
          <Lanes>
            {lanes.map((clips, i) => (
              <Lane key={i}>
                {clips.map((c) => <Clip key={c.x} data={c} />)}
              </Lane>
            ))}
          </Lanes>
          <HScroll>
            <SquareButton type='button' aria-label='Scroll left'><Icon name='left' /></SquareButton>
            <HThumb />
            <ScrollTail>
              <SquareButton type='button' aria-label='Scroll right'><Icon name='right' /></SquareButton>
              <SquareButton type='button' aria-label='Zoom in time' $raised><Icon name='plus' /></SquareButton>
              <ScrollGap />
              <SquareButton type='button' aria-label='Zoom out time' $raised><Icon name='minus' /></SquareButton>
            </ScrollTail>
          </HScroll>
          <Transport>
            {transports.map(([ name, before, ]) => (
              <TransportButton key={name} type='button' aria-label={name} $before={before}><Icon name={name} /></TransportButton>
            ))}
            <IconButton type='button' aria-label='Metronome options'><Icon name='down' size={14} /></IconButton>
          </Transport>
        </Timeline>
        <SideScroll>
          <SquareButton type='button' aria-label='Scroll up'><Icon name='up' /></SquareButton>
          <SideTrack />
          <SquareButton type='button' aria-label='Scroll down'><Icon name='down' /></SquareButton>
          <SquareButton type='button' aria-label='Taller tracks' $raised $before={1}><Icon name='plus' /></SquareButton>
          <SquareButton type='button' aria-label='Shorter tracks' $raised $before={7}><Icon name='minus' /></SquareButton>
          <SquareButton type='button' aria-label='Zoom tool' $raised $before={1}><Icon name='search' /></SquareButton>
        </SideScroll>
      </Workspace>
      <Dock>
        <Explorer />
        <Mixer />
      </Dock>
      <StatusBar>
        <Icon name='chip' />
        <span>118/8,089 MB</span>
        <span>Record Time (2 channels): 15:32:35</span>
        <Icon name='grip' />
      </StatusBar>
    </Window>
  );
}
